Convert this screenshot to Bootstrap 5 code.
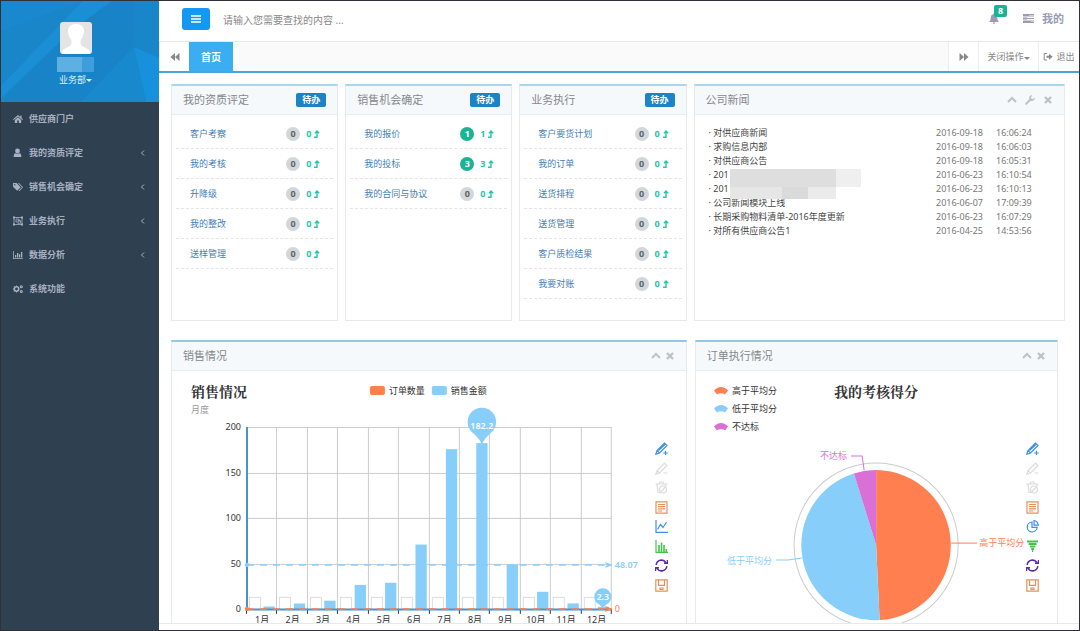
<!DOCTYPE html>
<html lang="zh-CN">
<head>
<meta charset="utf-8">
<meta name="viewport" content="width=device-width, initial-scale=1">
<title>供应商门户</title>
<link href="https://cdn.jsdelivr.net/npm/bootstrap@5.3.0/dist/css/bootstrap.min.css" rel="stylesheet">
<style>
  body { font-family: "Noto Sans", "Noto Sans CJK SC", sans-serif; font-size: 9px; line-height: 14px; color: #676a6c; border: 1px solid #303038; background: #fff; }
  a { text-decoration: none; }
  svg { display: block; flex-shrink: 0; }
  button { font-family: inherit; }
  .icon-sm { width: 10px; height: 10px; fill: currentColor; }

  .side { width: 158px; background: #2f4050; }
  .side-head { position: relative; height: 101px; padding-top: 21px; background: #1a86ca; overflow: hidden; }
  .side-bg { position: absolute; inset: 0; width: 100%; height: 100%; }
  .side-user { position: relative; margin-right: 9px; gap: 3px; }
  .side-user a { color: #dff1fc; line-height: 10px; }
  .side-menu a { height: 34px; padding: 0 12px; gap: 6px; color: #a7b1c2; font-weight: 700; }
  .chev { width: 8px; height: 8px; fill: none; stroke: currentColor; }

  .topbar { height: 41px; border-bottom: 1px solid #e7eaec; padding: 0 15px 5px 23px; }
  .menu-btn { width: 28px; height: 22px; padding: 0; background: #1499f2; border-radius: 3px; color: #fff; }
  .search { border: 0; outline: 0; width: 300px; font-size: 10px; color: #676a6c; padding: 2px 0 0; margin-left: 13px; }
  .search::placeholder { color: #888; opacity: 1; }
  .top-link { color: #999cb3; font-size: 11px; font-weight: 700; }
  .bell-count { position: absolute; left: 5px; top: -8px; width: 13px; height: 12px; border-radius: 2px; background: #1ab394; color: #fff; font-size: 9px; line-height: 12px; text-align: center; }

  .tabbar { height: 31px; border-bottom: 2px solid #4ba4dd; background: #fafafa; }
  .tab-cell { border: 0; width: 30px; background: #fff; color: #888; padding: 0; border-left: 1px solid #eee; display: flex; align-items: center; justify-content: center; gap: 3px; }
  .tab-close { width: 60px; gap: 0; }
  .tab-exit { width: 41px; }
  .tab-home { background: #3aadf3; color: #fff; width: 44px; font-size: 10px; font-weight: 700; display: flex; align-items: center; justify-content: center; }

  .pane { overflow-y: auto; scrollbar-width: none; border-bottom: 1px solid #e3eaf0; padding: 11px 14px 0 12px; margin-bottom: 6px; }
  .pane::-webkit-scrollbar { display: none; }
  .grid-top { display: grid; gap: 7px; grid-template-columns: repeat(3, minmax(0, 9fr)) minmax(0, 20fr); }
  .grid-bottom { display: grid; gap: 8px; grid-template-columns: minmax(0, 71fr) minmax(0, 50fr); margin-top: 19px; padding-right: 7px; }
  .panel { border: 1px solid #e7eaec; border-top: 2px solid #a5d7ed; min-width: 0; }
  .panel-head { height: 29px; padding: 0 11px; background: #f5f9fb; border-bottom: 1px solid #e9edef; }
  .panel-head h2 { margin: 0; font-size: 11px; line-height: 16px; font-weight: 400; color: #85888a; }
  .grid-bottom .panel { border-top: 2px solid #8fcbe6; }
  .todo { width: 30px; height: 14px; padding: 0; border: 0; border-radius: 2px; background: #1c84c6; color: #fff; font-size: 9px; font-weight: 700; line-height: 14px; }
  .tool-btn { border: 0; padding: 0; background: none; color: #bfc1c3; }

  .rows { padding: 4px 4px 21px; margin: 0; list-style: none; }
  .rows li { display: flex; align-items: center; height: 30px; padding: 0 12px 0 14px; border-bottom: 1px dashed #e3e6e8; }
  .rows a { color: #4580b8; margin-right: auto; }
  .cnt { width: 14px; height: 14px; border-radius: 7px; background: #d1d7da; color: #5e6468; font-weight: 700; text-align: center; }
  .cnt-on { background: #1ab394; color: #fff; }
  .trend { display: flex; align-items: center; gap: 3px; width: 15px; margin-left: 6px; color: #23c6a8; font-weight: 700; }
  .trend svg { width: 6px; height: 8px; fill: none; stroke: currentColor; stroke-width: 1.4; }

  .news { width: 100%; margin: 11px 0; color: #444; }
  .news td { padding: 0; white-space: nowrap; }
  .news td:first-child { padding-left: 14px; }
  .news td:nth-child(2) { width: 60px; color: #777; }
  .news td:nth-child(3) { width: 68px; color: #777; }
  .news a { color: #444; }
  .masked { position: absolute; left: 17px; top: 1px; }

  .chart { position: relative; }
  .chart > svg { width: 100%; height: auto; }
  .chart text { font-size: 9px; fill: #333; }
  .chart .chart-title { font-family: "Noto Serif CJK SC", "Liberation Serif", "Noto Sans CJK SC", serif; font-size: 14px; font-weight: 700; }
  .toolbox { position: absolute; right: 18px; top: 71px; height: 150px; display: flex; flex-direction: column; justify-content: space-between; }
  .toolbox button { border: 0; padding: 0; background: none; }
  .toolbox svg { width: 13px; height: 13px; fill: none; stroke: currentColor; stroke-width: 1.2; }
  .c-blue { color: #3c90e8; } .c-off { color: #dcdcdc; } .c-org { color: #ea8f5c; } .c-grn { color: #41c54b; } .c-pur { color: #5a2ca8; }
</style>
</head>
<body class="d-flex vh-100 overflow-hidden">

<svg width="0" height="0" class="position-absolute">
  <symbol id="up" viewBox="0 0 6 8"><path d="M0 7.200H3V2M1 3.200 3 1 5.200 3.200"/></symbol>
  <symbol id="chev" viewBox="0 0 8 8"><path d="M5 1.500 2.500 4 5 6.500"/></symbol>
  <symbol id="fold" viewBox="0 0 10 10"><path d="M1 7 5 3 9 7" fill="none" stroke="currentColor" stroke-width="2"/></symbol>
  <symbol id="times" viewBox="0 0 10 10"><path d="M2 2 8 8M8 2 2 8" fill="none" stroke="currentColor" stroke-width="2.400"/></symbol>
  <symbol id="wrench" viewBox="0 0 10 10"><path d="M1.200 8.800 5.500 4.500" stroke="currentColor" stroke-width="2" stroke-linecap="round"/><path d="M9.700 2.500A2.800 2.800 0 1 1 7.300.4L6 2 6.500 3.700 8.200 4Z"/></symbol>
  <symbol id="rewind" viewBox="0 0 10 10"><path d="M5 1V9L.500 5ZM9.500 1V9L5 5Z"/></symbol>
  <symbol id="pen-plus" viewBox="0 0 13 13"><path d="M.800 12.200 2 8.500 9.500 1 12 3.500 4.500 11ZM2 8.500 4.500 11M3.500 8.500 10.500 2M10.500 8.800V13M8.300 11H12.700"/></symbol>
  <symbol id="pen-minus" viewBox="0 0 13 13"><path d="M.800 12.200 2 8.500 9.500 1 12 3.500 4.500 11ZM2 8.500 4.500 11M8.500 11H12.500"/></symbol>
  <symbol id="bin" viewBox="0 0 13 13"><path d="M.500 3H12.500M4 3 5 1H8L9 3M2 3.500 3 11.500H5.500M11 3.500 10.800 5"/><circle cx="8" cy="8.500" r="3.500"/><path d="M5.500 11 10.500 6"/></symbol>
  <symbol id="doc" viewBox="0 0 13 13"><path d="M1 .800H12V12.200H1ZM3 3.500H10M3 5.700H10M3 7.900H10M3 10H7"/></symbol>
  <symbol id="line" viewBox="0 0 13 13"><path d="M1 0V12.300H13M2.500 9.500 5.500 4.500 8 7.500 11.500 2"/></symbol>
  <symbol id="bars" viewBox="0 0 13 13"><path d="M1 0V12.300H13"/><path d="M4 12V5M6.500 12V2.500M9 12V5M11.300 12V9" stroke-width="1.600"/></symbol>
  <symbol id="pie" viewBox="0 0 13 13"><path d="M6 2A5 5 0 1 0 11.200 7.300H6ZM8 .7V5.200H12.300A4.400 4.400 0 0 0 8 .7Z"/></symbol>
  <symbol id="funnel" viewBox="0 0 13 13"><path d="M1 1.500H12M2.600 4H10.500M4 6.500H9.200M5.200 9H8M6 11H7.200" stroke-width="1.900"/></symbol>
  <symbol id="redo" viewBox="0 0 13 13"><path d="M1.200 6A5.300 5.300 0 0 1 11 3.700M12.500 1V4.300H9M11.800 7A5.300 5.300 0 0 1 2 9.300M.500 12V8.700H4" stroke-width="1.500"/></symbol>
  <symbol id="disk" viewBox="0 0 13 13"><path d="M.800.800H12.200V12.200H.800ZM3.500 1V6.300H9.500V1M5 9H8V10.500H5Z"/></symbol>
</svg>

<aside class="side flex-shrink-0">
  <div class="side-head">
    <svg class="side-bg" viewBox="0 0 158 101" preserveAspectRatio="none" aria-hidden="true">
      <rect width="158" height="101" fill="#1a86ca"/>
      <path d="M82 0H111L70 30 0 97V85Z" fill="#1b8fd6"/>
      <path d="M111 0H133V46L80 101H0L70 30Z" fill="#1884c7"/>
      <path d="M133 46 158 57V101H145Z" fill="#1791dc"/>
      <path d="M133 46 145 101H80Z" fill="#1989ce"/>
      <path d="M0 0H82L0 30Z" fill="#1988ce"/>
    </svg>
    <div class="side-user d-flex flex-column align-items-center">
      <svg width="32" height="32" viewBox="0 0 32 32" role="img" aria-label="头像">
        <rect width="32" height="32" rx="3" fill="#e4e4e4"/>
        <path d="M16 2C20.500 2 24.500 4.500 24 10C23.800 14 21.500 16 20.500 19V22C22 25.500 29 26 30.500 30A3 3 0 0 1 29 32H3A3 3 0 0 1 1.500 30C3 26 10 25.500 11.500 22V19C10.500 16 8.200 14 8 10C7.500 4.500 11.500 2 16 2Z" fill="#fff"/>
      </svg>
      <svg width="37" height="15" viewBox="0 0 37 15" aria-hidden="true"><path d="M0 0H25V15H0Z" fill="#5eb0e2"/><path d="M25 0H37V15H25Z" fill="#3e9dda"/></svg>
      <a href="#" class="d-flex align-items-center">业务部<svg width="6" height="3" viewBox="0 0 6 3" fill="currentColor"><path d="M0 0H6L3 3Z"/></svg></a>
    </div>
  </div>
  <nav class="side-menu">
    <a href="#" class="d-flex align-items-center"><svg class="icon-sm" viewBox="0 0 10 10"><path d="M5 1 0 5.300 .7 6 5 2.500 9.300 6 10 5.300 8.500 4V1.500H7.300V3ZM5 3.200 1.800 6V9H4.200V6.500H5.800V9H8.200V6Z"/></svg>供应商门户</a>
    <a href="#" class="d-flex align-items-center"><svg class="icon-sm" viewBox="0 0 10 10"><circle cx="4.500" cy="3" r="2.400"/><path d="M.7 9V7.500Q1 5 3 5.200 4.500 6.400 6 5.200 8 5 8.300 7.500V9Z"/></svg>我的资质评定<svg class="chev ms-auto"><use href="#chev"/></svg></a>
    <a href="#" class="d-flex align-items-center"><svg class="icon-sm" viewBox="0 0 10 10"><path d="M0 1H3.600L7.700 5.200 4.200 8.800 0 4.700ZM5 1.200 9 5.200 5.800 8.600 6.400 9.200 10 5.200 6 1Z"/><circle cx="1.800" cy="2.800" r=".7" fill="#2f4050"/></svg>销售机会确定<svg class="chev ms-auto"><use href="#chev"/></svg></a>
    <a href="#" class="d-flex align-items-center"><svg class="icon-sm" viewBox="0 0 10 10"><path d="M1 1.500H9V8.500H1ZM3 3H6V6H3ZM4.500 4.500H7.500V7.300H4.500" fill="none" stroke="currentColor" stroke-width=".8"/><path d="M0 .5H2V2.500H0ZM8 .5H10V2.500H8ZM0 7.500H2V9.500H0ZM8 7.500H10V9.500H8Z"/></svg>业务执行<svg class="chev ms-auto"><use href="#chev"/></svg></a>
    <a href="#" class="d-flex align-items-center"><svg class="icon-sm" viewBox="0 0 10 10"><path d="M0 1H.8V8.200H10V9H0ZM2 5H3.300V7.500H2ZM4 3H5.300V7.500H4ZM6 4.200H7.300V7.500H6ZM8 2H9.300V7.500H8Z"/></svg>数据分析<svg class="chev ms-auto"><use href="#chev"/></svg></a>
    <a href="#" class="d-flex align-items-center"><svg class="icon-sm" viewBox="0 0 10 10"><g fill="none" stroke="currentColor"><circle cx="3.500" cy="5" r="2.200" stroke-width="1.600"/><circle cx="8.300" cy="2.700" r="1" stroke-width="1.100"/><circle cx="8.300" cy="7.500" r="1" stroke-width="1.100"/><path d="M3.500 1.500V2.500M3.500 7.500V8.500M0 5H1M1 2.500 1.700 3.200M1 7.500 1.700 6.800"/></g></svg>系统功能</a>
  </nav>
</aside>

<div class="d-flex flex-column flex-grow-1" style="min-width:0">
  <header class="topbar d-flex align-items-center flex-shrink-0">
    <button class="menu-btn btn d-flex align-items-center justify-content-center" type="button" aria-label="菜单"><svg width="10" height="8" viewBox="0 0 10 8"><path d="M0 1H10M0 4H10M0 7H10" stroke="#fff" stroke-width="1.600"/></svg></button>
    <input class="search" type="text" placeholder="请输入您需要查找的内容 ..." aria-label="搜索">
    <a href="#" class="top-link position-relative ms-auto" aria-label="通知"><svg width="10" height="11" viewBox="0 0 10 11" fill="currentColor"><path d="M5 0 5.700 1.200C8 1.700 8.200 3.500 8.300 5.500 8.400 7 9 8 10 9H0C1 8 1.600 7 1.700 5.500 1.800 3.500 2 1.700 4.300 1.200ZM3.700 9.500H6.300Q6 10.900 5 10.900T3.700 9.500Z"/></svg><span class="bell-count">8</span></a>
    <a href="#" class="top-link d-flex align-items-center gap-2 ms-4"><svg width="11" height="9" viewBox="0 0 11 9" fill="none" stroke="currentColor"><path d="M0 .5H11M0 2H11M0 4.500H11M0 7H11M0 8.500H11" stroke-width="1"/><path d="M0 1.200H6M0 4.500H4M0 7.800H8" stroke-width="1.800"/></svg>我的</a>
  </header>

  <div class="tabbar d-flex flex-shrink-0">
    <button type="button" class="tab-cell" aria-label="向左"><svg class="icon-sm"><use href="#rewind"/></svg></button>
    <a href="#" class="tab-home">首页</a>
    <button type="button" class="tab-cell ms-auto" aria-label="向右"><svg class="icon-sm" viewBox="0 0 10 10"><path d="M.500 1V9L5 5ZM5 1V9L9.500 5Z"/></svg></button>
    <button type="button" class="tab-cell tab-close">关闭操作<svg class="mt-1" width="6" height="3" viewBox="0 0 6 3" fill="currentColor"><path d="M0 0H6L3 3Z"/></svg></button>
    <button type="button" class="tab-cell tab-exit"><svg class="icon-sm" viewBox="0 0 10 10"><path d="M4 1.500H1.200V8H4" fill="none" stroke="currentColor"/><path d="M3.500 3.800H6V1.800L9.700 4.800 6 7.800V5.800H3.500Z"/></svg>退出</button>
  </div>

  <main class="pane flex-grow-1">
    <div class="grid-top">
      <section class="panel">
        <div class="panel-head d-flex align-items-center justify-content-between"><h2>我的资质评定</h2><button type="button" class="todo">待办</button></div>
        <ul class="rows">
          <li><a href="#">客户考察</a><span class="cnt">0</span><span class="trend">0<svg><use href="#up"/></svg></span></li>
          <li><a href="#">我的考核</a><span class="cnt">0</span><span class="trend">0<svg><use href="#up"/></svg></span></li>
          <li><a href="#">升降级</a><span class="cnt">0</span><span class="trend">0<svg><use href="#up"/></svg></span></li>
          <li><a href="#">我的整改</a><span class="cnt">0</span><span class="trend">0<svg><use href="#up"/></svg></span></li>
          <li><a href="#">送样管理</a><span class="cnt">0</span><span class="trend">0<svg><use href="#up"/></svg></span></li>
        </ul>
      </section>
      <section class="panel">
        <div class="panel-head d-flex align-items-center justify-content-between"><h2>销售机会确定</h2><button type="button" class="todo">待办</button></div>
        <ul class="rows">
          <li><a href="#">我的报价</a><span class="cnt cnt-on">1</span><span class="trend">1<svg><use href="#up"/></svg></span></li>
          <li><a href="#">我的投标</a><span class="cnt cnt-on">3</span><span class="trend">3<svg><use href="#up"/></svg></span></li>
          <li><a href="#">我的合同与协议</a><span class="cnt">0</span><span class="trend">0<svg><use href="#up"/></svg></span></li>
        </ul>
      </section>
      <section class="panel">
        <div class="panel-head d-flex align-items-center justify-content-between"><h2>业务执行</h2><button type="button" class="todo">待办</button></div>
        <ul class="rows">
          <li><a href="#">客户要货计划</a><span class="cnt">0</span><span class="trend">0<svg><use href="#up"/></svg></span></li>
          <li><a href="#">我的订单</a><span class="cnt">0</span><span class="trend">0<svg><use href="#up"/></svg></span></li>
          <li><a href="#">送货排程</a><span class="cnt">0</span><span class="trend">0<svg><use href="#up"/></svg></span></li>
          <li><a href="#">送货管理</a><span class="cnt">0</span><span class="trend">0<svg><use href="#up"/></svg></span></li>
          <li><a href="#">客户质检结果</a><span class="cnt">0</span><span class="trend">0<svg><use href="#up"/></svg></span></li>
          <li><a href="#">我要对账</a><span class="cnt">0</span><span class="trend">0<svg><use href="#up"/></svg></span></li>
        </ul>
      </section>
      <section class="panel">
        <div class="panel-head d-flex align-items-center"><h2 class="me-auto">公司新闻</h2>
          <div class="d-flex gap-1"><button type="button" class="tool-btn" aria-label="折叠"><svg class="icon-sm"><use href="#fold"/></svg></button><button type="button" class="tool-btn px-1" aria-label="设置"><svg class="icon-sm"><use href="#wrench"/></svg></button><button type="button" class="tool-btn" aria-label="关闭"><svg class="icon-sm"><use href="#times"/></svg></button></div></div>
        <table class="news">
          <tr><td>· <a href="#">对供应商新闻</a></td><td>2016-09-18</td><td>16:06:24</td></tr>
          <tr><td>· <a href="#">求购信息内部</a></td><td>2016-09-18</td><td>16:06:03</td></tr>
          <tr><td>· <a href="#">对供应商公告</a></td><td>2016-09-18</td><td>16:05:31</td></tr>
          <tr><td>· <a href="#" class="position-relative">201<svg class="masked" width="131" height="30" viewBox="0 0 131 30"><path d="M0 0H106V18H0Z" fill="#dedede"/><path d="M106 0H131V18H106Z" fill="#efefef"/><path d="M0 18H52V30H0Z" fill="#e6e6e6"/><path d="M52 18H78V30H52Z" fill="#dadada"/><path d="M78 18H106V30H78Z" fill="#ebebeb"/></svg></a></td><td>2016-06-23</td><td>16:10:54</td></tr>
          <tr><td>· <a href="#">201</a></td><td>2016-06-23</td><td>16:10:13</td></tr>
          <tr><td>· <a href="#">公司新闻模块上线</a></td><td>2016-06-07</td><td>17:09:39</td></tr>
          <tr><td>· <a href="#">长期采购物料清单-2016年度更新</a></td><td>2016-06-23</td><td>16:07:29</td></tr>
          <tr><td>· <a href="#">对所有供应商公告1</a></td><td>2016-04-25</td><td>14:53:56</td></tr>
        </table>
      </section>
    </div>

    <div class="grid-bottom">
      <section class="panel">
        <div class="panel-head d-flex align-items-center"><h2 class="me-auto">销售情况</h2>
          <div class="d-flex gap-1"><button type="button" class="tool-btn" aria-label="折叠"><svg class="icon-sm"><use href="#fold"/></svg></button><button type="button" class="tool-btn" aria-label="关闭"><svg class="icon-sm"><use href="#times"/></svg></button></div></div>
        <div class="chart">
          <svg viewBox="0 0 514 280">
            <text x="19" y="26" class="chart-title">销售情况</text>
            <text x="19" y="42" style="fill:#999">月度</text>
            <rect x="198" y="15" width="15" height="9" rx="2" fill="#ff7f50"/><text x="217" y="23">订单数量</text>
            <rect x="260" y="15" width="15" height="9" rx="2" fill="#87cefa"/><text x="279" y="23">销售金额</text>
            <g id="plot"></g>
            <path d="M75 56V240" stroke="#4a92c8" stroke-width="2"/>
            <path d="M74 238.500H440" stroke="#4a92c8" stroke-width="2"/>
            <path d="M75 238H434" stroke="#ff7f50" stroke-width="1.500" stroke-dasharray="7 6"/>
            <circle cx="75" cy="238" r="2.200" fill="#ff7f50"/><path d="M441 238 433 235 435 238 433 241Z" fill="#ff7f50"/>
            <path d="M75 194H434" stroke="#87cefa" stroke-width="1.500" stroke-dasharray="7 6"/>
            <circle cx="75" cy="194" r="2.200" fill="#87cefa"/><path d="M441 194 433 191 435 194 433 197Z" fill="#87cefa"/>
            <text x="443" y="197" style="fill:#87cefa;font-weight:600">48.07</text>
            <text x="443" y="241" style="fill:#ff7f50">0</text>
            <path d="M310 73Q307 67 300 61A14.200 14.200 0 1 1 320 61Q313 67 310 73Z" fill="#87cefa"/>
            <text x="310" y="58" text-anchor="middle" style="fill:#fff;font-weight:600">182.2</text>
            <path d="M431 237Q429 234 425 232A8.500 8.500 0 1 1 437 232Q433 234 431 237Z" fill="#87cefa"/>
            <text x="431" y="229" text-anchor="middle" style="fill:#fff;font-weight:600">2.3</text>
          </svg>
          <div class="toolbox">
            <button type="button" class="c-blue" aria-label="辅助线"><svg><use href="#pen-plus"/></svg></button>
            <button type="button" class="c-off" aria-label="删除辅助线"><svg><use href="#pen-minus"/></svg></button>
            <button type="button" class="c-off" aria-label="清空辅助线"><svg><use href="#bin"/></svg></button>
            <button type="button" class="c-org" aria-label="数据视图"><svg><use href="#doc"/></svg></button>
            <button type="button" class="c-blue" aria-label="折线图"><svg><use href="#line"/></svg></button>
            <button type="button" class="c-grn" aria-label="柱形图"><svg><use href="#bars"/></svg></button>
            <button type="button" class="c-pur" aria-label="还原"><svg><use href="#redo"/></svg></button>
            <button type="button" class="c-org" aria-label="保存"><svg><use href="#disk"/></svg></button>
          </div>
        </div>
      </section>
      <section class="panel">
        <div class="panel-head d-flex align-items-center"><h2 class="me-auto">订单执行情况</h2>
          <div class="d-flex gap-1"><button type="button" class="tool-btn" aria-label="折叠"><svg class="icon-sm"><use href="#fold"/></svg></button><button type="button" class="tool-btn" aria-label="关闭"><svg class="icon-sm"><use href="#times"/></svg></button></div></div>
        <div class="chart">
          <svg viewBox="0 0 361 280">
            <defs><path id="fan" d="M0 3.500Q3 0 7 0T14 3.500L11 7.500 9.500 6.500Q7 5.800 4.500 6.500L3 7.500Z"/></defs>
            <use href="#fan" x="18" y="16" fill="#ff7f50"/><text x="36" y="23">高于平均分</text>
            <use href="#fan" x="18" y="34" fill="#87cefa"/><text x="36" y="41">低于平均分</text>
            <use href="#fan" x="18" y="52" fill="#da70d6"/><text x="36" y="59">不达标</text>
            <text x="180" y="26" text-anchor="middle" class="chart-title">我的考核得分</text>
            <circle cx="180" cy="174" r="82" fill="none" stroke="#ccc"/>
            <path d="M180 174V99A75 75 0 0 1 183.500 248.900Z" fill="#ff7f50"/>
            <path d="M180 174 183.500 248.900A75 75 0 0 1 157.800 102.400Z" fill="#87cefa"/>
            <path d="M180 174 157.800 102.400A75 75 0 0 1 180 99Z" fill="#da70d6"/>
            <g fill="none"><path d="M155 85H166L168 99" stroke="#da70d6"/><path d="M255 172H281" stroke="#ff7f50"/><path d="M80 189H92L106 187" stroke="#87cefa"/></g>
            <text x="151" y="88" text-anchor="end" style="fill:#da70d6">不达标</text>
            <text x="283" y="175" style="fill:#ff7f50">高于平均分</text>
            <text x="76" y="193" text-anchor="end" style="fill:#87cefa">低于平均分</text>
          </svg>
          <div class="toolbox">
            <button type="button" class="c-blue" aria-label="辅助线"><svg><use href="#pen-plus"/></svg></button>
            <button type="button" class="c-off" aria-label="删除辅助线"><svg><use href="#pen-minus"/></svg></button>
            <button type="button" class="c-off" aria-label="清空辅助线"><svg><use href="#bin"/></svg></button>
            <button type="button" class="c-org" aria-label="数据视图"><svg><use href="#doc"/></svg></button>
            <button type="button" class="c-blue" aria-label="饼图"><svg><use href="#pie"/></svg></button>
            <button type="button" class="c-grn" aria-label="漏斗图"><svg><use href="#funnel"/></svg></button>
            <button type="button" class="c-pur" aria-label="还原"><svg><use href="#redo"/></svg></button>
            <button type="button" class="c-org" aria-label="保存"><svg><use href="#disk"/></svg></button>
          </div>
        </div>
      </section>
    </div>
  </main>
</div>

<script src="https://cdn.jsdelivr.net/npm/bootstrap@5.3.0/dist/js/bootstrap.bundle.min.js"></script>
<script>
  // Monthly sales amount, drawn as grid, bars and axis labels
  const sales = [2.6, 5.9, 9, 26.4, 28.7, 70.7, 175.6, 182.2, 48.7, 18.8, 6, 2.3];
  const left = 75, right = 440, base = 238, top0 = 56, step = (right - left) / 12;
  const yOf = v => base - v * (base - top0) / 200;
  let out = '';
  for (let v = 0; v <= 200; v += 50) {
    const y = Math.round(yOf(v)) + .5;
    out += `<path d="M${left} ${y}H${right}" stroke="#ccc"/><text x="${left - 6}" y="${y + 3}" text-anchor="end">${v}</text>`;
  }
  for (let i = 0; i <= 12; i++) {
    const x = Math.round(left + i * step) - .5;
    out += `<path d="M${x} ${top0}V${base}" stroke="#ccc"/><path d="M${x} ${base}V${base + 5}" stroke="#333"/>`;
  }
  sales.forEach((v, i) => {
    const x = left + i * step;
    out += `<rect x="${Math.round(x + 3) - .5}" y="226.5" width="11" height="12" fill="#fff" stroke="#ddd"/>`;
    out += `<rect x="${x + 16.5}" y="${yOf(v)}" width="11.3" height="${base - yOf(v)}" fill="#87cefa"/>`;
    out += `<text x="${x + step / 2}" y="252" text-anchor="middle">${i + 1}月</text>`;
  });
  document.getElementById('plot').innerHTML = out;
</script>
</body>
</html>
